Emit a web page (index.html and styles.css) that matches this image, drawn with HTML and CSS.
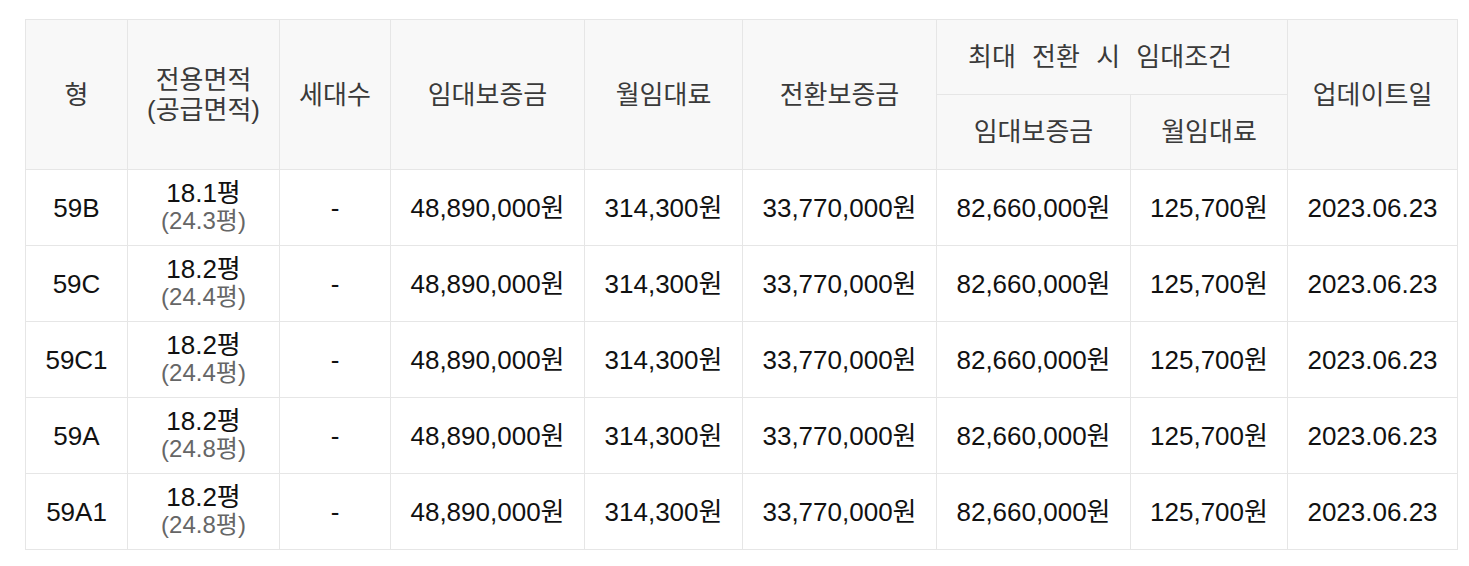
FILE: index.html
```html
<!DOCTYPE html>
<html lang="ko">
<head>
<meta charset="utf-8">
<link rel="stylesheet" href="styles.css">
</head>
<body>
<div class="wrap">
<table class="rent">
  <colgroup>
    <col class="c1"><col class="c2"><col class="c3"><col class="c4"><col class="c5"><col class="c6"><col class="c7"><col class="c8"><col class="c9">
  </colgroup>
  <thead>
    <tr class="h1">
      <th rowspan="2">형</th>
      <th rowspan="2">전용면적<br>(공급면적)</th>
      <th rowspan="2">세대수</th>
      <th rowspan="2">임대보증금</th>
      <th rowspan="2">월임대료</th>
      <th rowspan="2">전환보증금</th>
      <th colspan="2" class="wide">최대 전환 시 임대조건</th>
      <th rowspan="2">업데이트일</th>
    </tr>
    <tr class="h2">
      <th>임대보증금</th>
      <th>월임대료</th>
    </tr>
  </thead>
  <tbody>
    <tr><td>59B</td><td class="area">18.1평<span class="sub">(24.3평)</span></td><td>-</td><td>48,890,000원</td><td>314,300원</td><td>33,770,000원</td><td>82,660,000원</td><td>125,700원</td><td>2023.06.23</td></tr>
    <tr><td>59C</td><td class="area">18.2평<span class="sub">(24.4평)</span></td><td>-</td><td>48,890,000원</td><td>314,300원</td><td>33,770,000원</td><td>82,660,000원</td><td>125,700원</td><td>2023.06.23</td></tr>
    <tr><td>59C1</td><td class="area">18.2평<span class="sub">(24.4평)</span></td><td>-</td><td>48,890,000원</td><td>314,300원</td><td>33,770,000원</td><td>82,660,000원</td><td>125,700원</td><td>2023.06.23</td></tr>
    <tr><td>59A</td><td class="area">18.2평<span class="sub">(24.8평)</span></td><td>-</td><td>48,890,000원</td><td>314,300원</td><td>33,770,000원</td><td>82,660,000원</td><td>125,700원</td><td>2023.06.23</td></tr>
    <tr><td>59A1</td><td class="area">18.2평<span class="sub">(24.8평)</span></td><td>-</td><td>48,890,000원</td><td>314,300원</td><td>33,770,000원</td><td>82,660,000원</td><td>125,700원</td><td>2023.06.23</td></tr>
  </tbody>
</table>
</div>
</body>
</html>
```

FILE: styles.css
```css
html, body {
  margin: 0;
  padding: 0;
  background: #ffffff;
}
body {
  font-family: "Liberation Sans", "Noto Sans CJK KR", sans-serif;
}
.wrap {
  padding: 19px 12px 0 25px;
}
.rent {
  border-collapse: collapse;
  table-layout: fixed;
  width: 1432px;
  border-top: 1px solid #cfcfcf;
}
.c1 { width: 102px; }
.c2 { width: 152px; }
.c3 { width: 111px; }
.c4 { width: 194px; }
.c5 { width: 158px; }
.c6 { width: 194px; }
.c7 { width: 194px; }
.c8 { width: 157px; }
.c9 { width: 170px; }
.rent th, .rent td {
  border: 1px solid #e6e6e6;
  text-align: center;
  vertical-align: middle;
  padding: 0;
}
.rent thead th {
  background: #f8f8f8;
  color: #3a3a3a;
  font-weight: normal;
  font-size: 26px;
  line-height: 30px;
}
.rent .h1 th {
  height: 74px;
}
.rent .h2 th {
  height: 74px;
}
.rent th.wide {
  word-spacing: 9px;
  padding-right: 24px;
}
.rent tbody td {
  height: 75px;
  color: #111111;
  font-size: 26px;
  line-height: 30px;
}
.rent td.area {
  font-size: 26px;
  line-height: 28px;
}
.sub {
  display: block;
  color: #666666;
  font-size: 24px;
  line-height: 30px;
  margin-top: -1px;
}
```
